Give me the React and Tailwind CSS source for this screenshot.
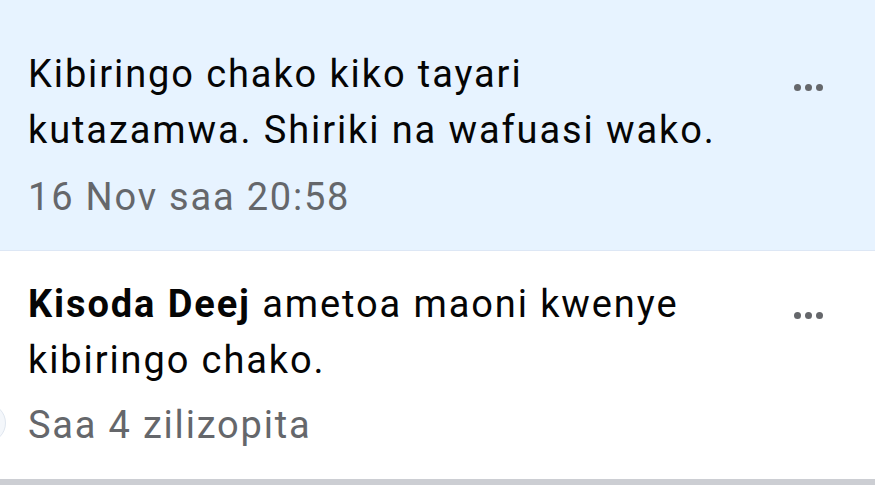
export default function App() {
  return (
    <main className="w-[875px] h-[485px] bg-white flex flex-col overflow-hidden" style={{ fontFamily: "Roboto, 'Noto Sans', sans-serif" }}>
      <section className="bg-[#e7f3ff] border-b border-[#dde7f5] h-[251px] flex pl-[28px] pr-[52px] pt-[46px]">
        <div className="flex-1">
          <p className="text-[38px] leading-[56px] tracking-[1.9px] text-[#050505]">
            Kibiringo chako kiko tayari
            <br />
            kutazamwa. Shiriki na wafuasi wako.
          </p>
          <p className="mt-[17px] text-[38px] leading-[44px] tracking-[1.8px] text-[#65676b]">16 Nov saa 20:58</p>
        </div>
        <Dots className="mt-[38px]" />
      </section>

      <section className="relative flex-1 flex pl-[28px] pr-[52px] pt-[25px]">
        <div className="absolute left-[-34px] top-[152px] w-[40px] h-[40px] rounded-full border border-[#dfe6ef] bg-[#f4f7fb]" />
        <div className="flex-1">
          <p className="text-[38px] leading-[56px] tracking-[1.9px] text-[#050505]">
            <span className="font-bold">Kisoda Deej</span> ametoa maoni kwenye
            <br />
            kibiringo chako.
          </p>
          <p className="mt-[15px] text-[38px] leading-[44px] tracking-[1.8px] text-[#65676b]">Saa 4 zilizopita</p>
        </div>
        <Dots className="mt-[36px]" />
      </section>

      <div className="h-[6px] bg-[#ccced3]" />
    </main>
  )
}

function Dots({ className }) {
  return (
    <div className={`flex gap-[4px] h-[7px] ${className}`}>
      <span className="w-[7px] h-[7px] rounded-full bg-[#65676b]" />
      <span className="w-[7px] h-[7px] rounded-full bg-[#65676b]" />
      <span className="w-[7px] h-[7px] rounded-full bg-[#65676b]" />
    </div>
  )
}
